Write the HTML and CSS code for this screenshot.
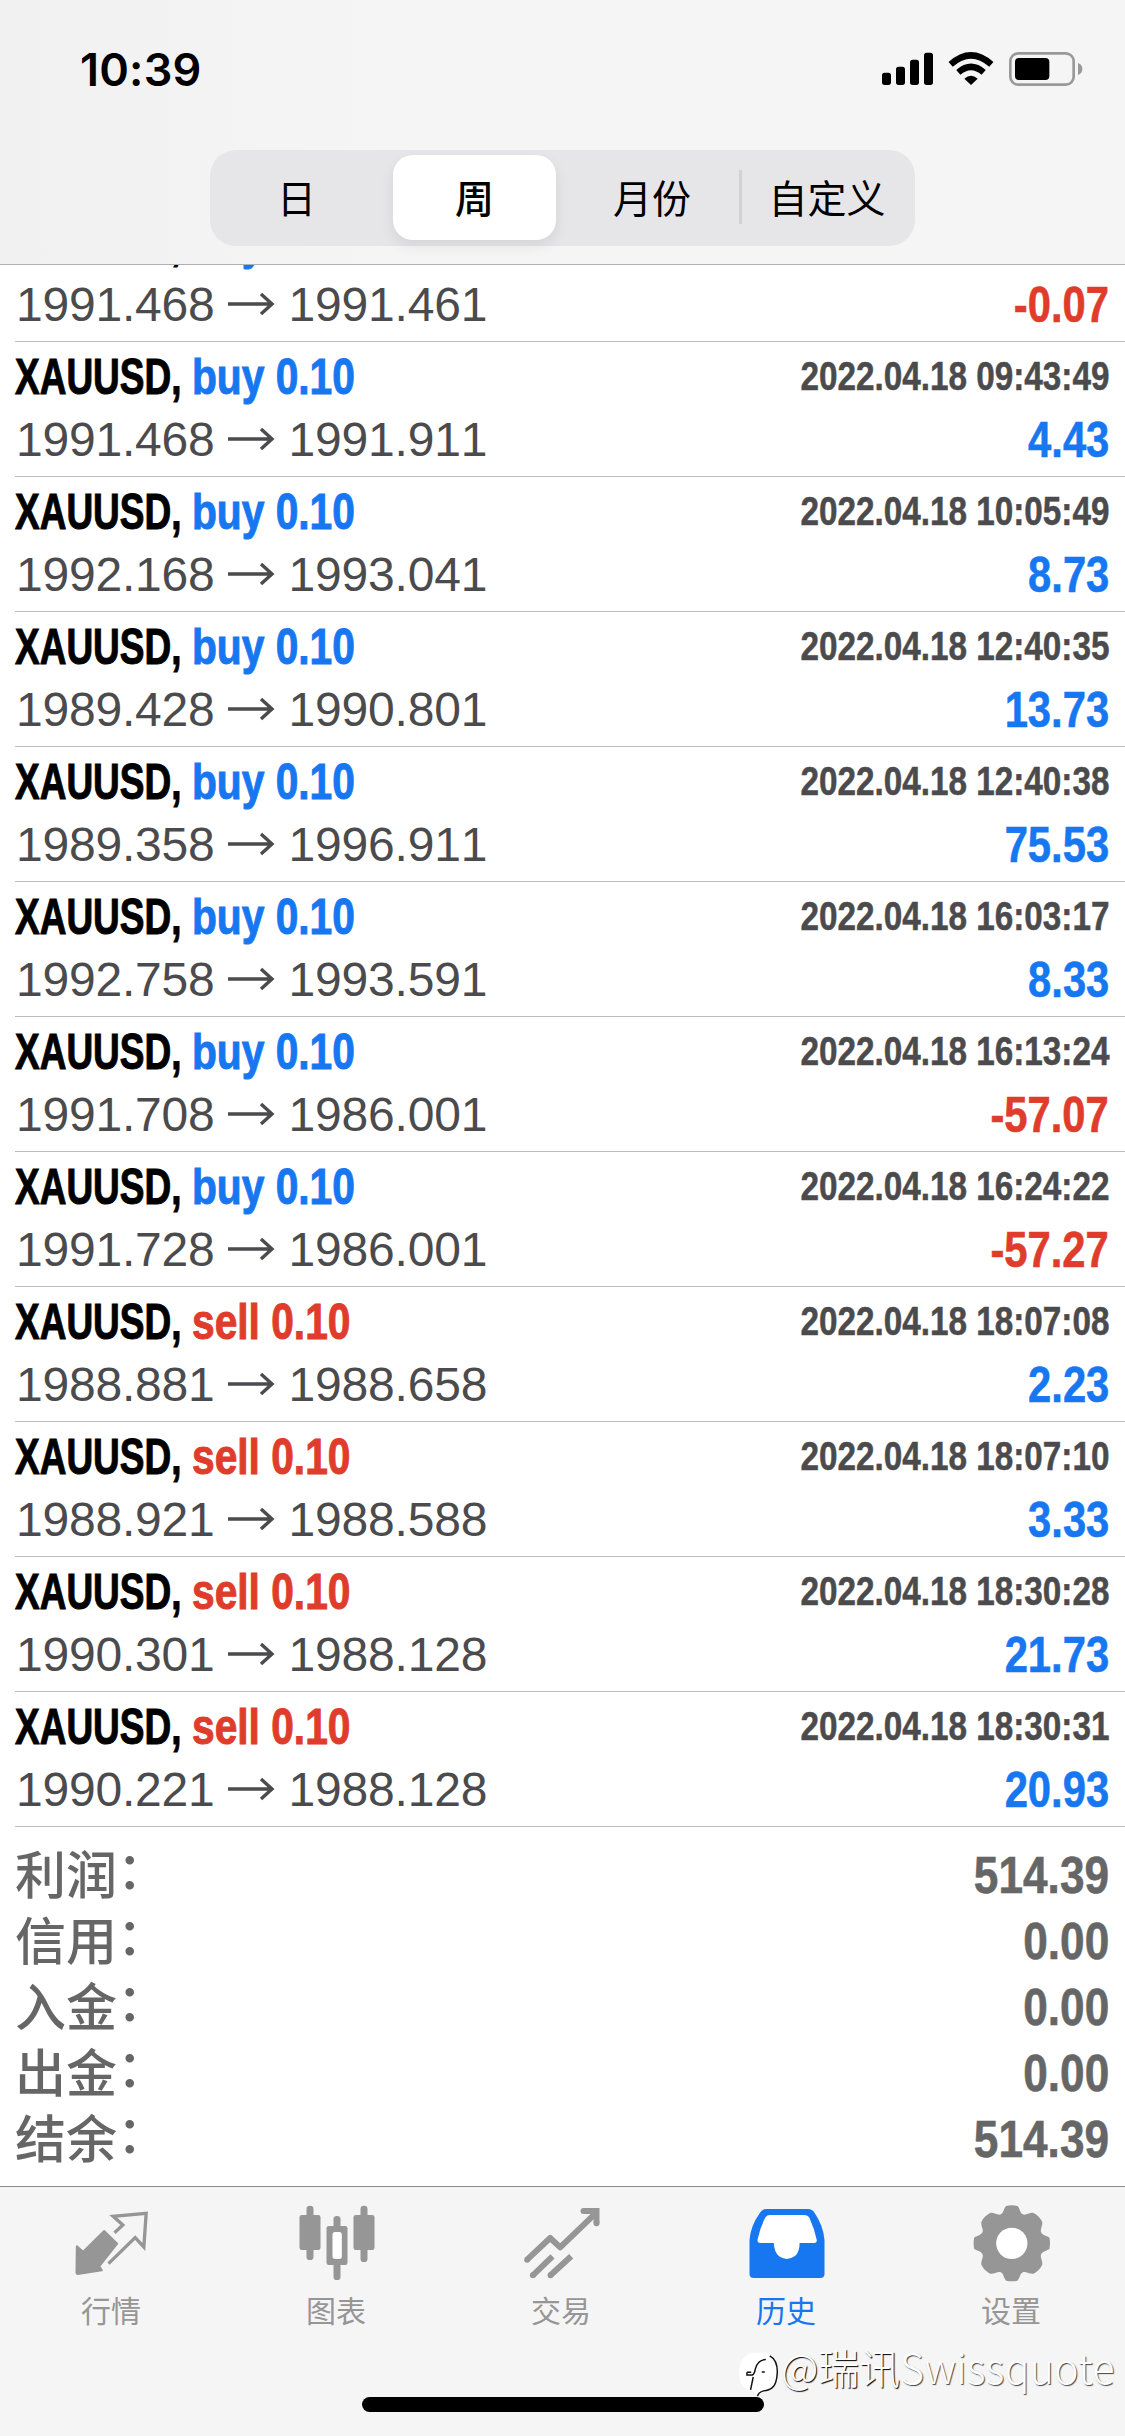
FILE: index.html
```html
<!DOCTYPE html>
<html lang="zh-CN">
<head>
<meta charset="utf-8">
<title>历史</title>
<link rel="stylesheet" href="styles.css">
</head>
<body>
<header class="header">
  <div class="status">
    <span class="clock">10:39</span>
    <svg class="status-icons" viewBox="0 0 690 180">
      <rect x="36" y="98" width="27" height="37" rx="8"/>
      <rect x="78" y="80" width="27" height="55" rx="8"/>
      <rect x="120" y="59" width="27" height="76" rx="8"/>
      <rect x="162" y="38" width="27" height="97" rx="8"/>
      <path d="M303 135L283 116Q303 98 323 116Z"/>
      <path d="M265 97Q303 64 341 97M242 73Q303 19 364 73" fill="none" stroke="#000" stroke-width="19"/>
      <rect x="421" y="40" width="190" height="94" rx="24" fill="none" stroke="#999" stroke-width="8"/>
      <rect x="435" y="54" width="103" height="66" rx="12"/>
      <path d="M624 69Q637 74 637 87T624 105Z" fill="#999"/>
    </svg>
  </div>
  <nav class="segments">
    <span class="segment day">日</span>
    <span class="segment active">周</span>
    <span class="segment month">月份</span>
    <span class="segment divided">自定义</span>
  </nav>
</header>
<main class="history">
  <div class="deals" id="deals"></div>
  <div class="summary">
    <div class="total"><span>利润<span class="colon">：</span></span><b class="value">514.39</b></div>
    <div class="total"><span>信用<span class="colon">：</span></span><b class="value">0.00</b></div>
    <div class="total"><span>入金<span class="colon">：</span></span><b class="value">0.00</b></div>
    <div class="total"><span>出金<span class="colon">：</span></span><b class="value">0.00</b></div>
    <div class="total"><span>结余<span class="colon">：</span></span><b class="value">514.39</b></div>
  </div>
</main>
<footer class="footer">
  <nav class="tabs">
    <div class="tab">
      <svg class="tab-icon" viewBox="22.5 36 270 240">
        <path d="M49 169L68 185L131 123L170 161L116 229L124 241L52 252Q48 252 48 246Z" fill="currentColor" stroke="currentColor" stroke-width="6" stroke-linejoin="round"/>
        <path d="M162 128L187 105L158 79L257 70L250 171L224 143L144 221" fill="none" stroke="currentColor" stroke-width="10"/>
      </svg>
      <span>行情</span>
    </div>
    <div class="tab">
      <svg class="tab-icon" viewBox="697.5 36 270 240" fill="currentColor">
        <rect x="738" y="47" width="21" height="163" rx="10"/>
        <rect x="717" y="75" width="63" height="105" rx="7"/>
        <rect x="900" y="47" width="21" height="169" rx="10"/>
        <rect x="879" y="75" width="63" height="105" rx="7"/>
        <rect x="819" y="78" width="21" height="192" rx="10"/>
        <rect x="798" y="108" width="63" height="117" rx="7"/>
        <rect x="816" y="126" width="28" height="81" rx="8" fill="#fff"/>
      </svg>
      <span>图表</span>
    </div>
    <div class="tab">
      <svg class="tab-icon" viewBox="22.5 36 270 240" fill="none" stroke="currentColor" stroke-width="18">
        <path d="M50 209L119 144L149 172L252 73M67 256L126 199M120 256L182 199" stroke-linejoin="round"/>
        <path d="M219 63H258V100"/>
        <path d="M50 209h0M67 256h0M120 256h0M219 63h0M258 100h0" stroke-linecap="round"/>
      </svg>
      <span>交易</span>
    </div>
    <div class="tab current">
      <svg class="tab-icon" viewBox="697.5 36 270 240">
        <path d="M768 57H893Q905 57 912 68Q939 108 942 150V252Q942 264 929 264H730Q717 264 717 251V150Q720 108 748 69Q755 57 768 57Z" fill="currentColor"/>
        <path d="M779 75H881Q892 75 897 84Q911 114 919 151Q919 159 911 159H867V167Q865 189 852 199Q829 215 806 199Q791 187 790 159H750Q740 159 741 149Q749 111 765 82Q769 75 779 75Z" fill="#fff"/>
      </svg>
      <span>历史</span>
    </div>
    <div class="tab">
      <svg class="tab-icon" viewBox="-131.4 -124 270 240">
        <path fill="currentColor" d="M-17 -112Q0 -116 17 -112C25 -104 24 -91 33 -87S55 -94 65 -91Q82 -83 91 -65C94 -54 84 -43 88 -33S106 -22 113 -17Q116 0 113 17C106 22 92 24 88 33S94 54 91 65Q83 82 65 91C55 94 42 83 33 87S25 104 17 112Q0 116 -17 112C-25 104 -24 91 -33 87S-55 94 -65 91Q-82 83 -91 65C-94 54 -84 43 -88 33S-106 22 -113 17Q-116 0 -113 -17C-106 -22 -92 -24 -88 -33S-94 -54 -91 -65Q-83 -82 -65 -91C-55 -94 -42 -83 -33 -87S-25 -104 -17 -112Z"/>
        <circle r="47" fill="#fff"/>
      </svg>
      <span>设置</span>
    </div>
  </nav>
  <div class="home-bar"></div>
  <div class="watermark">
    <svg class="watermark-icon" viewBox="0 0 130 150">
      <path d="M50 8H72Q112 12 117 53Q118 92 107 108Q96 122 77 123Q64 126 59 136L42 122Q6 118 3 75Q2 12 50 8Z" fill="#fff"/>
      <path d="M96 17Q119 29 119 66Q117 104 103 114Q95 121 77 123Q62 127 59 139M27 67V75H43Q50 72 52 58Q58 30 84 28M27 67H40M46 81L38 120M72 66H81" fill="none" stroke="#111" stroke-width="4.5"/>
    </svg>
    <span class="watermark-text">@瑞讯</span><span class="watermark-name">Swissquote</span>
  </div>
</footer>
<script src="deals.js"></script>
</body>
</html>
```
FILE: styles.css
```css
* { box-sizing: border-box; }
body {
  margin: 0;
  width: 1125px;
  height: 2436px;
  display: flex;
  flex-direction: column;
  overflow: hidden;
  background: #fff;
  font-family: "Liberation Sans", "Noto Sans CJK SC", sans-serif;
}
.header {
  height: 265px;
  flex: none;
  background: linear-gradient(90deg, #f1f1f2, #f5f5f5 35%);
  border-bottom: 1px solid #b0b0b2;
}
.status {
  height: 150px;
  padding: 40px 25px 0 80px;
  display: flex;
  justify-content: space-between;
}
.clock {
  font: 600 45px/60px Inter, sans-serif;
  letter-spacing: .2px;
}
.status-icons { width: 230px; height: 60px; }
.segments {
  width: 705px;
  height: 96px;
  margin-left: 210px;
  padding: 5px 7px;
  display: grid;
  grid-template-columns: 176px 163px 183px 169px;
  border-radius: 26px;
  background: #e6e6e8;
  font: 400 39px/83px "Noto Sans CJK SC", sans-serif;
  text-align: center;
}
.segment { height: 85px; }
.day { padding-right: 17px; }
.month { padding-left: 9px; }
.active {
  border-radius: 20px;
  background: #fff;
  font-weight: 500;
  box-shadow: 0 6px 14px rgba(0, 0, 0, .08);
}
.divided {
  background: linear-gradient(#d2d2d5, #d2d2d5) 0 15px / 3px 54px no-repeat;
  padding-left: 7px;
}
.history {
  height: 1921px;
  flex: none;
  overflow: hidden;
}
.deals { margin-top: -58px; }
.deal {
  height: 135px;
  margin-left: 15px;
  padding: 5px 16px 0 0;
  border-bottom: 1px solid #bcbcc0;
}
.deal-line {
  display: flex;
  justify-content: space-between;
  white-space: nowrap;
}
.deal-top { height: 60px; line-height: 60px; }
.deal-bottom { height: 66px; line-height: 66px; }
.title {
  display: flex;
  font-weight: 700;
  font-size: 50px;
  -webkit-text-stroke: 1px;
}
.symbol { width: 177px; }
.symbol-text { display: block; width: 225px; transform: scaleX(.74); transform-origin: 0 50%; }
.side { transform: scaleX(.814); transform-origin: 0 50%; }
.buy, .gain { color: #1777f0; }
.sell, .loss { color: #e03c2c; }
.time {
  color: #4b4b4d;
  font-weight: 700;
  font-size: 40px;
  line-height: 58px;
  transform: scaleX(.832);
  transform-origin: 100% 50%;
  -webkit-text-stroke: .5px;
}
.prices {
  display: flex;
  align-items: center;
  padding-left: 1px;
  color: #4b4b4d;
  font-size: 48px;
  font-kerning: none;
  letter-spacing: -.2px;
}
.arrow { width: 48px; height: 24px; margin: 0 14px 3px 12px; }
.profit {
  font-weight: 700;
  font-size: 50px;
  transform: scaleX(.835);
  transform-origin: 100% 50%;
  -webkit-text-stroke: .6px;
}
.summary {
  padding: 15px 16px 0 15px;
  color: #666;
}
.total {
  height: 66px;
  display: flex;
  justify-content: space-between;
  font: 500 51px/60px "Noto Sans CJK SC", sans-serif;
}
.colon { position: relative; top: -5px; }
.value {
  font: 700 52px/66px "Liberation Sans", sans-serif;
  transform: scaleX(.85);
  transform-origin: 100% 50%;
  -webkit-text-stroke: .6px;
}
.footer {
  height: 250px;
  flex: none;
  position: relative;
  background: #f5f5f5;
  border-top: 1px solid #8a8a8c;
}
.tabs {
  height: 210px;
  padding-top: 15px;
  display: grid;
  grid-template-columns: repeat(5, 225px);
  color: #969696;
}
.tab {
  display: flex;
  flex-direction: column;
  align-items: center;
  font: 400 30px/40px "Noto Sans CJK SC", sans-serif;
}
.tab span { margin: 7px 3px 0 0; }
.tab-icon { width: 90px; height: 80px; }
.current { color: #1777f0; }
.home-bar {
  width: 402px;
  height: 15px;
  margin-left: 362px;
  border-radius: 8px;
  background: #000;
}
.watermark {
  position: absolute;
  left: 738px;
  top: 150px;
  height: 60px;
  display: flex;
  color: #fff;
  font: 300 41px/58px "Noto Sans CJK SC", sans-serif;
  text-shadow: 1px 1px 1px #000;
  white-space: nowrap;
}
.watermark-icon { width: 43px; height: 50px; margin-top: 13px; }
.watermark-name { text-shadow: 1px 1px 1px #444; letter-spacing: .3px; }
```
FILE: deals.js
```js
const deals = [
  ["buy", "", "1991.468", "1991.461", "-0.07"],
  ["buy", "2022.04.18 09:43:49", "1991.468", "1991.911", "4.43"],
  ["buy", "2022.04.18 10:05:49", "1992.168", "1993.041", "8.73"],
  ["buy", "2022.04.18 12:40:35", "1989.428", "1990.801", "13.73"],
  ["buy", "2022.04.18 12:40:38", "1989.358", "1996.911", "75.53"],
  ["buy", "2022.04.18 16:03:17", "1992.758", "1993.591", "8.33"],
  ["buy", "2022.04.18 16:13:24", "1991.708", "1986.001", "-57.07"],
  ["buy", "2022.04.18 16:24:22", "1991.728", "1986.001", "-57.27"],
  ["sell", "2022.04.18 18:07:08", "1988.881", "1988.658", "2.23"],
  ["sell", "2022.04.18 18:07:10", "1988.921", "1988.588", "3.33"],
  ["sell", "2022.04.18 18:30:28", "1990.301", "1988.128", "21.73"],
  ["sell", "2022.04.18 18:30:31", "1990.221", "1988.128", "20.93"]
];

document.getElementById("deals").innerHTML = deals.map(([side, time, open, close, profit]) => `
  <div class="deal">
    <div class="deal-line deal-top">
      <div class="title"><span class="symbol"><span class="symbol-text">XAUUSD,</span></span><span class="side ${side}">${side} 0.10</span></div>
      <span class="time">${time}</span>
    </div>
    <div class="deal-line deal-bottom">
      <div class="prices">${open}<svg class="arrow" viewBox="0 0 48 24"><path d="M1 12H45M34 2L45 12L34 22" fill="none" stroke="#4b4b4d" stroke-width="3.4"/></svg>${close}</div>
      <span class="profit ${profit.startsWith("-") ? "loss" : "gain"}">${profit}</span>
    </div>
  </div>`).join("");
```
